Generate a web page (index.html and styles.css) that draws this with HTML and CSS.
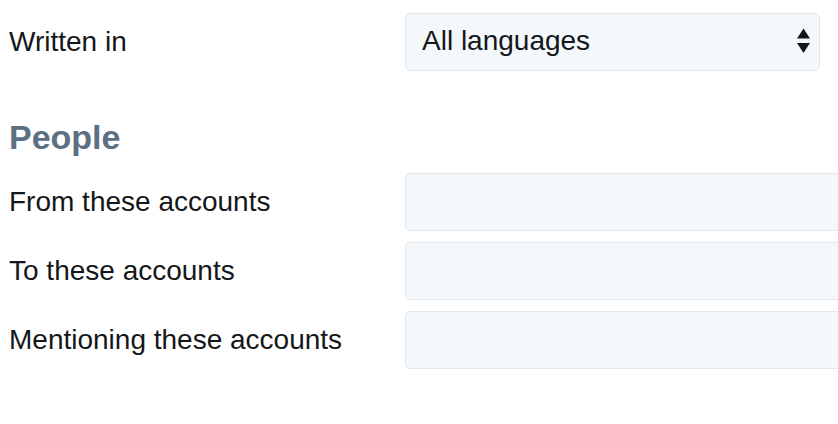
FILE: index.html
```html
<!DOCTYPE html>
<html lang="en">
<head>
<meta charset="utf-8">
<title>Advanced search</title>
<link rel="stylesheet" href="styles.css">
</head>
<body>
<form class="form">
  <div class="row">
    <label class="label" for="lang">Written in</label>
    <div class="select-wrap">
      <select id="lang" class="select">
        <option>All languages</option>
      </select>
      <svg class="select-arrows" width="13" height="26" viewBox="0 0 13 26" aria-hidden="true">
        <polygon points="0,10.5 6.5,0.5 13,10.5" fill="#14171a"/>
        <polygon points="0,15 13,15 6.5,25" fill="#14171a"/>
      </svg>
    </div>
  </div>

  <h2 class="section-title">People</h2>

  <div class="rows">
    <div class="row">
      <label class="label" for="from">From these accounts</label>
      <input id="from" class="input" type="text">
    </div>
    <div class="row">
      <label class="label" for="to">To these accounts</label>
      <input id="to" class="input" type="text">
    </div>
    <div class="row">
      <label class="label" for="mention">Mentioning these accounts</label>
      <input id="mention" class="input" type="text">
    </div>
  </div>
</form>
</body>
</html>
```

FILE: styles.css
```css
html, body {
  margin: 0;
  padding: 0;
  overflow: hidden;
  background: #ffffff;
}

body {
  font-family: "Liberation Sans", Arial, Helvetica, sans-serif;
  color: #14171a;
}

.form {
  padding: 13px 0 0 9px;
}

.row {
  display: flex;
  align-items: center;
  height: 58px;
}

.label {
  width: 396px;
  flex: none;
  font-size: 28px;
  line-height: 32px;
  color: #14171a;
}

.select-wrap {
  position: relative;
  width: 415px;
  height: 58px;
}

.select {
  appearance: none;
  -webkit-appearance: none;
  box-sizing: border-box;
  width: 100%;
  height: 100%;
  margin: 0;
  padding: 0 40px 3px 16px;
  font-family: "Liberation Sans", Arial, Helvetica, sans-serif;
  font-size: 28px;
  color: #14171a;
  background: #f5f8fa;
  border: 1px solid #e1e8ed;
  border-radius: 5px;
  outline: none;
}

.select-arrows {
  position: absolute;
  top: 15px;
  right: 10px;
  pointer-events: none;
}

.section-title {
  margin: 49px 0 19px;
  font-size: 34px;
  line-height: 34px;
  font-weight: 700;
  color: #5b7083;
}

.rows {
  display: flex;
  flex-direction: column;
  gap: 11px;
}

.input {
  box-sizing: border-box;
  flex: 1;
  min-width: 0;
  height: 58px;
  margin: 0;
  padding: 0 16px;
  font-family: "Liberation Sans", Arial, Helvetica, sans-serif;
  font-size: 28px;
  color: #14171a;
  background: #f5f8fa;
  border: 1px solid #e1e8ed;
  border-right: none;
  border-radius: 5px 0 0 5px;
  outline: none;
}
```
